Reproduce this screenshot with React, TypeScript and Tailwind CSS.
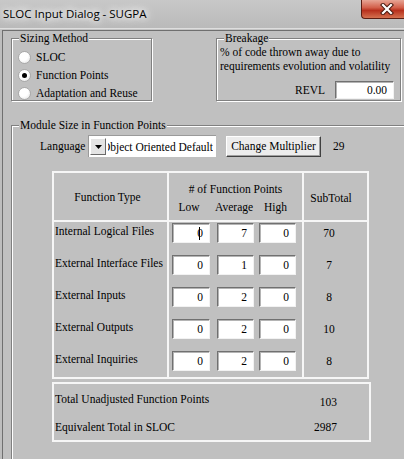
import React from "react";

type GBProps = { title: string; className: string; children?: React.ReactNode };

function GroupBox({ title, className, children }: GBProps) {
  return (
    <div
      className={`relative shrink-0 border border-[#808080] shadow-[inset_1px_1px_0_#ffffff,1px_1px_0_#ffffff] ${className}`}
    >
      <span className="absolute left-[7px] top-[-8px] bg-[#c0c0c0] px-[1px] leading-[14px] whitespace-nowrap">
        {title}
      </span>
      {children}
    </div>
  );
}

function Radio({ label, checked }: { label: string; checked?: boolean }) {
  return (
    <div className="flex h-[18px] items-center">
      <div className="flex h-[13px] w-[13px] items-center justify-center rounded-full border border-[#a9a9a9] bg-[radial-gradient(circle_at_40%_35%,#ffffff,#ffffff_45%,#dedede)]">
        {checked && <div className="h-[5px] w-[5px] rounded-full bg-black" />}
      </div>
      <span className="ml-[5px] leading-[14px]">{label}</span>
    </div>
  );
}

function Field({
  value,
  className,
  caret,
}: {
  value: string;
  className: string;
  caret?: boolean;
}) {
  return (
    <div
      className={`flex items-center justify-end border border-t-[#707070] border-l-[#707070] border-r-[#f2f2f2] border-b-[#f2f2f2] bg-white pr-[6px] leading-[14px] shadow-[inset_1px_1px_0_#b4b4b4] ${className}`}
    >
      {caret && <span className="-mr-[3px] inline-block h-[13px] w-px bg-black" />}
      <span>{value}</span>
    </div>
  );
}

const rows = [
  { label: "Internal Logical Files", low: "0", avg: "7", high: "0", sub: "70", caret: true },
  { label: "External Interface Files", low: "0", avg: "1", high: "0", sub: "7" },
  { label: "External Inputs", low: "0", avg: "2", high: "0", sub: "8" },
  { label: "External Outputs", low: "0", avg: "2", high: "0", sub: "10" },
  { label: "External Inquiries", low: "0", avg: "2", high: "0", sub: "8" },
];

export default function App() {
  return (
    <div className="flex h-[459px] w-[404px] flex-col overflow-hidden bg-[#bdbdbd] font-['Liberation_Serif','Times_New_Roman',serif] text-[11.5px] text-black">
      {/* Title bar */}
      <div className="flex h-[28px] shrink-0 items-start justify-between bg-[linear-gradient(#c8c8c8,#bababa)]">
        <div className="ml-[3px] mt-[6px] font-['Open_Sans','Noto_Sans',sans-serif] text-[11.5px] leading-[16px] text-black [text-shadow:0_0_6px_#ffffff,0_0_10px_#ffffff,0_0_14px_#ffffff]">
          SLOC Input Dialog - SUGPA
        </div>
        <div className="-mr-[7px] flex h-[19px] w-[50px] items-center justify-center rounded-bl-[4px] border-b border-l border-[#5b1d12] bg-[linear-gradient(#e7a595,#d3604b_42%,#b7301d_58%,#d4704f)]">
          <svg width="14" height="12" viewBox="0 0 14 12">
            <path d="M3 2 L11 10 M11 2 L3 10" stroke="#4a1a10" strokeWidth="4.2" strokeLinecap="square" />
            <path d="M3 2 L11 10 M11 2 L3 10" stroke="#ffffff" strokeWidth="2.2" strokeLinecap="square" />
          </svg>
        </div>
      </div>
      <div className="h-px shrink-0 bg-[#dedede]" />
      <div className="h-px shrink-0 bg-[#c4c4c4]" />

      {/* Client area */}
      <div className="ml-[2px] flex flex-1 flex-col border-l border-t border-[#6f6f6f] bg-[#c0c0c0] pl-[8px] pt-[7px]">
        <div className="flex">
          <GroupBox title="Sizing Method" className="h-[63px] w-[141px] pl-[6px] pt-[9px]">
            <Radio label="SLOC" />
            <Radio label="Function Points" checked />
            <Radio label="Adaptation and Reuse" />
          </GroupBox>
          <GroupBox title="Breakage" className="ml-[64px] h-[63px] w-[185px] pl-[3px] pr-[6px] pt-[6px]">
            <div className="leading-[14px] whitespace-nowrap">
              % of code thrown away due to
              <br />
              requirements evolution and volatility
            </div>
            <div className="mt-[8px] flex items-center justify-end">
              <span className="leading-[14px]">REVL</span>
              <Field value="0.00" className="ml-[10px] h-[18px] w-[59px] pr-[4px]" />
            </div>
          </GroupBox>
        </div>

        <GroupBox title="Module Size in Function Points" className="mt-[24px] h-[340px] w-[400px] pt-[9px]">
          {/* Language row */}
          <div className="flex h-[22px] items-center pl-[28px]">
            <span className="w-[48px] leading-[14px]">Language</span>
            <div className="flex h-[22px] w-[128px] items-center border-l border-t border-[#9a9a9a] bg-white pl-[1px] pr-[3px]">
              <div className="flex h-[17px] w-[16px] shrink-0 items-center justify-center border border-b-[#6a6a6a] border-l-white border-r-[#6a6a6a] border-t-white bg-[#e4e4e4]">
                <svg width="7" height="4" viewBox="0 0 7 4">
                  <path d="M0 0 H7 L3.5 4 Z" fill="#000000" />
                </svg>
              </div>
              <div className="ml-[2px] flex min-w-0 flex-1 justify-end overflow-hidden whitespace-nowrap leading-[14px]">
                <span className="shrink-0">Object Oriented Default</span>
              </div>
            </div>
            <div className="ml-[10px] flex h-[21px] w-[95px] items-center justify-center border border-b-[#404040] border-l-white border-r-[#404040] border-t-white bg-[#ececec] leading-[14px] shadow-[inset_-1px_-1px_0_#a0a0a0]">
              Change Multiplier
            </div>
            <span className="ml-[12px] leading-[14px]">29</span>
          </div>

          {/* Table */}
          <div className="ml-[40px] mt-[14px] w-[317px] border-2 border-[#f6f6f6]">
            <div className="flex h-[49px] border-b-2 border-[#f6f6f6]">
              <div className="flex w-[113px] items-center justify-center pr-[6px] leading-[14px]">
                Function Type
              </div>
              <div className="flex w-[135px] flex-col border-l-2 border-[#f6f6f6]">
                <div className="mt-[9px] text-center leading-[14px]"># of Function Points</div>
                <div className="mt-[4px] flex leading-[14px]">
                  <span className="ml-[1px] w-[38px] text-center">Low</span>
                  <span className="ml-[7px] w-[37px] text-center">Average</span>
                  <span className="ml-[5px] w-[37px] text-center">High</span>
                </div>
              </div>
              <div className="flex w-[65px] items-center border-l-2 border-[#f6f6f6] pt-[2px]">
                <span className="w-[54px] text-center leading-[14px]">SubTotal</span>
              </div>
            </div>
            <div className="flex">
              <div className="flex w-[113px] flex-col gap-[12px] pb-[6px] pt-[1px]">
                {rows.map((r) => (
                  <div key={r.label} className="h-[20px] pl-[1px] pt-[1px] leading-[14px] whitespace-nowrap">
                    {r.label}
                  </div>
                ))}
              </div>
              <div className="flex w-[135px] flex-col gap-[12px] border-l-2 border-[#f6f6f6] pb-[6px] pt-[1px]">
                {rows.map((r) => (
                  <div key={r.label} className="ml-[3px] flex h-[20px]">
                    <Field value={r.low} caret={r.caret} className="h-[20px] w-[38px]" />
                    <Field value={r.avg} className="ml-[7px] h-[20px] w-[37px]" />
                    <Field value={r.high} className="ml-[5px] h-[20px] w-[37px]" />
                  </div>
                ))}
              </div>
              <div className="flex w-[65px] flex-col gap-[12px] border-l-2 border-[#f6f6f6] pb-[6px] pt-[1px]">
                {rows.map((r) => (
                  <div key={r.label} className="flex h-[20px] w-[50px] items-center justify-center leading-[14px]">
                    {r.sub}
                  </div>
                ))}
              </div>
            </div>
          </div>

          {/* Totals */}
          <div className="ml-[40px] mt-[3px] h-[60px] w-[319px] border-2 border-[#f6f6f6] pl-[1px] pr-[32px] pt-[8px] leading-[14px]">
            <div className="flex justify-between">
              <span>Total Unadjusted Function Points</span>
              <span className="mt-[3px]">103</span>
            </div>
            <div className="mt-[11px] flex justify-between">
              <span>Equivalent Total in SLOC</span>
              <span>2987</span>
            </div>
          </div>
        </GroupBox>
      </div>
    </div>
  );
}
